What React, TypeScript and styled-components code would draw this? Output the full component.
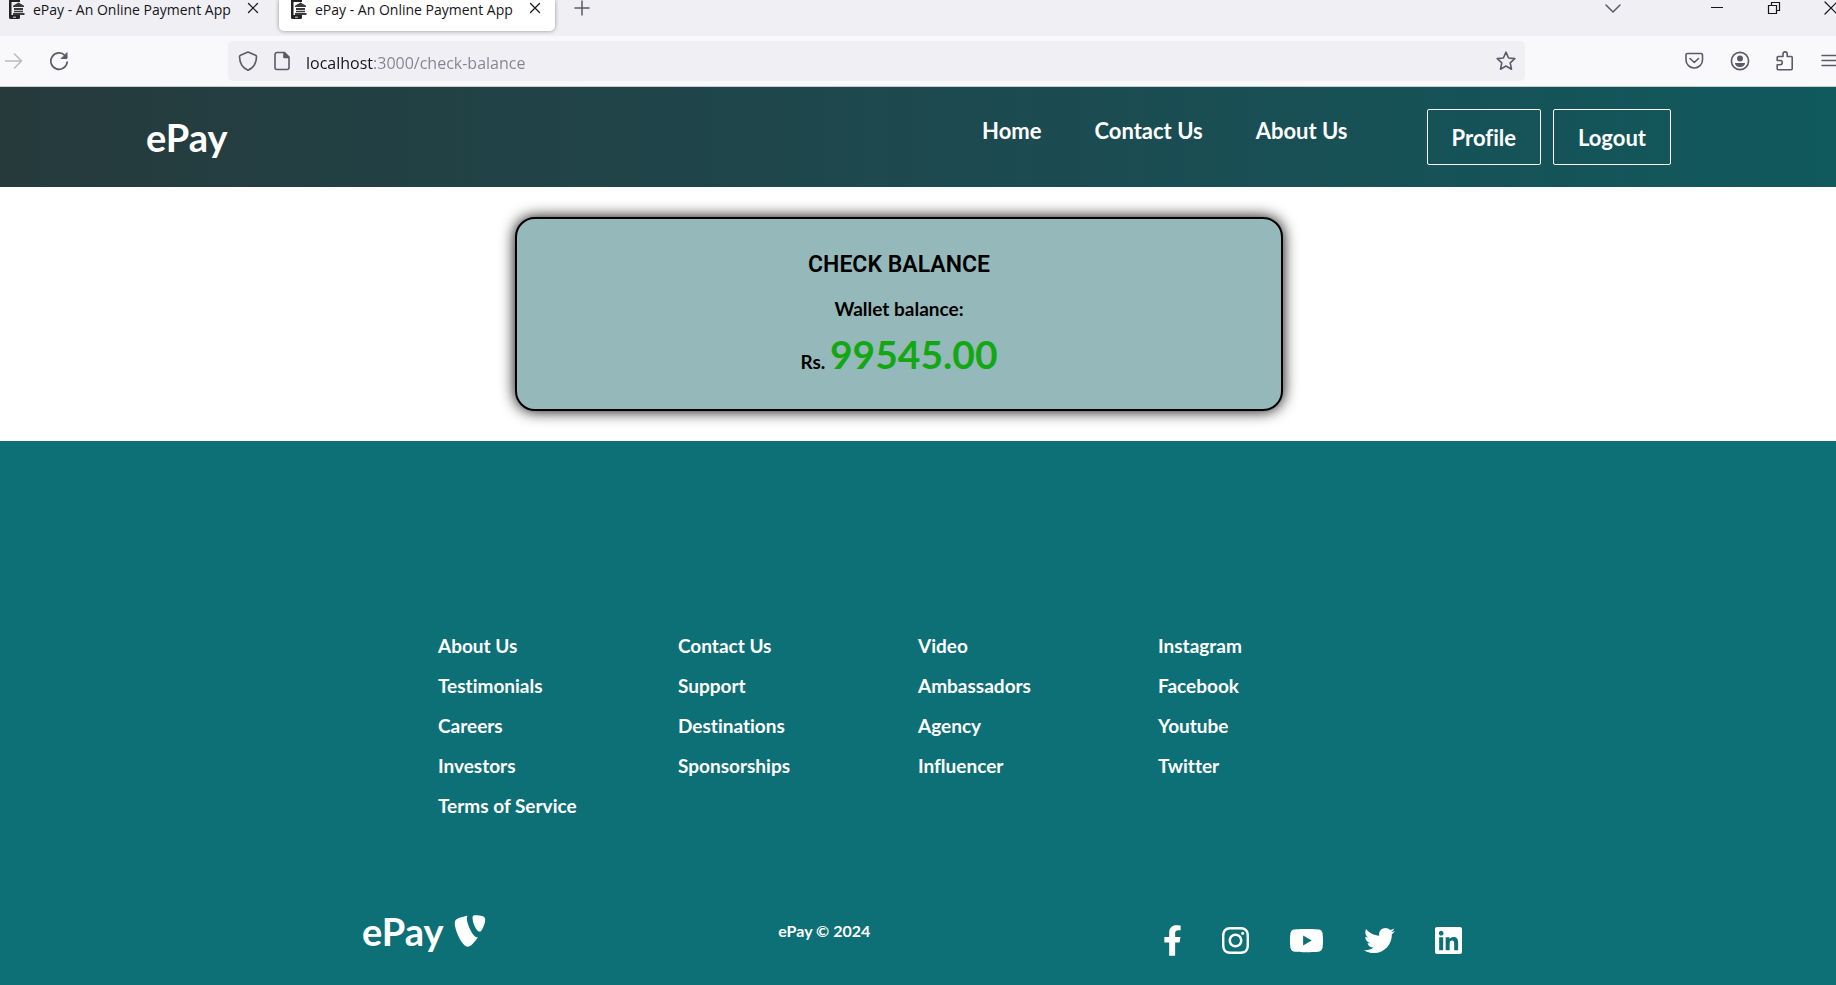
import React from "react";
import styled, { createGlobalStyle } from "styled-components";
import { FaFacebookF, FaInstagram, FaYoutube, FaTwitter, FaLinkedin, FaTypo3 } from "react-icons/fa";

const GlobalStyle = createGlobalStyle`
  * { box-sizing: border-box; }
  body {
    margin: 0;
    background: #fff;
    color: #000;
    font-family: Lato, "Open Sans", sans-serif;
    font-weight: 700;
    font-variant-ligatures: no-common-ligatures;
  }
  button, input { font: inherit; font-variant-ligatures: inherit; }
  a { color: inherit; text-decoration: none; }
`;

const Page = styled.div`
  display: flex;
  flex-direction: column;
  min-height: 100vh;
`;

/* ---------- Browser window ---------- */

const Browser = styled.div`
  overflow: hidden;
  border-bottom: 1px solid #ccccd0;
  background: #f9f9fb;
  color: #5b5b66;
  font-family: "Open Sans", "Noto Sans", sans-serif;
  font-weight: 400;
`;

const TabStrip = styled.div`
  display: flex;
  align-items: flex-start;
  gap: 6px;
  height: 36px;
  padding-right: 0;
  margin-left: -3px;
  background: #f0eff4;
`;

const Tab = styled.div<{ $active?: boolean }>`
  display: flex;
  align-items: flex-start;
  gap: 8px;
  width: 276px;
  height: 31px;
  padding: 0 13px 0 12px;
  border-radius: 0 0 5px 5px;
  background: ${p => (p.$active ? "#fff" : "transparent")};
  box-shadow: ${p => (p.$active ? "0 0 4px rgba(0, 0, 0, 0.4)" : "none")};
  color: #15141a;
  font-size: 14px;
  line-height: 20px;
  white-space: nowrap;
`;

const TabTitle = styled.span`
  flex: 1;
`;

const IconButton = styled.button<{ $faded?: boolean }>`
  display: flex;
  flex: none;
  align-items: center;
  justify-content: center;
  width: 20px;
  height: 20px;
  padding: 0;
  border: 0;
  background: none;
  color: inherit;
  opacity: ${p => (p.$faded ? 0.4 : 1)};
`;

const TabButton = styled(IconButton)`
  width: 14px;
  height: 16px;
  color: #15141a;
`;

const NewTabButton = styled(IconButton)`
  height: 16px;
  margin-left: 11px;
`;

const WindowButtons = styled.div`
  display: flex;
  gap: 37px;
  height: 16px;
  margin: 0 -5px 0 auto;
  align-items: center;
  color: #15141a;
`;

const ListTabs = styled(IconButton)`
  margin-right: 47px;
  color: #5b5b66;
`;

const Toolbar = styled.div`
  display: flex;
  align-items: center;
  height: 50px;
`;

const NavButtons = styled.div`
  display: flex;
  flex: none;
  gap: 25px;
  width: 228px;
  padding-left: 4px;
`;

const AddressBar = styled.form`
  display: flex;
  flex: 1;
  align-items: center;
  gap: 14px;
  height: 40px;
  padding: 0 9px 0 10px;
  border-radius: 5px;
  background: #f0eff4;
`;

const AddressInput = styled.input`
  flex: 1;
  min-width: 0;
  height: 30px;
  padding: 3px 0 0;
  border: 0;
  outline: 0;
  background: linear-gradient(90deg, #15141a 68px, #84838c 68px);
  background-clip: text;
  -webkit-background-clip: text;
  color: transparent;
  font-size: 16px;
`;

const ToolbarActions = styled.div`
  display: flex;
  flex: none;
  justify-content: flex-end;
  gap: 25px;
  width: 315px;
  margin-right: -4px;
`;

/* ---------- Site header ---------- */

const Header = styled.header`
  display: flex;
  justify-content: center;
  background: linear-gradient(90deg, #263a3c, #1b4c52 60%, #10595d);
  color: #fff;
`;

const HeaderInner = styled.div`
  display: flex;
  align-items: center;
  width: 100%;
  max-width: 1544px;
  min-height: 100px;
  padding-right: 19px;
`;

const Brand = styled.a`
  display: flex;
  align-items: center;
  gap: 10px;
  font-size: 38px;
  line-height: 46px;
`;

const Nav = styled.nav`
  display: flex;
  gap: 53px;
  margin: 0 79px 12px auto;
  font-size: 22px;
  line-height: 28px;
`;

const Actions = styled.div`
  display: flex;
  gap: 12px;
`;

const OutlineButton = styled.button`
  height: 56px;
  padding: 2px 24px 0;
  border: 1px solid #fff;
  border-radius: 2px;
  background: transparent;
  color: #fff;
  font-size: 22px;
  line-height: 28px;
`;

/* ---------- Balance card ---------- */

const Main = styled.main`
  display: flex;
  justify-content: center;
  padding: 30px 38px 30px 0;
`;

const Card = styled.section`
  display: flex;
  flex-direction: column;
  align-items: center;
  width: 768px;
  padding: 32px 20px 21px;
  border: 2px solid #000;
  border-radius: 20px;
  background: #95b9ba;
  box-shadow: 0 0 15px #000;
`;

const CardTitle = styled.h1`
  margin: 0 0 18px;
  font-family: Roboto, "Liberation Sans", sans-serif;
  font-size: 23px;
  font-weight: 600;
  line-height: 28px;
`;

const CardLabel = styled.p`
  margin: 0 0 7px;
  font-size: 19px;
  line-height: 24px;
`;

const Balance = styled.p`
  margin: 0;
  font-size: 19px;
  line-height: 52px;
`;

const Amount = styled.span`
  color: #13a813;
  font-size: 39px;
`;

/* ---------- Footer ---------- */

const Footer = styled.footer`
  display: flex;
  flex: 1;
  flex-direction: column;
  align-items: center;
  padding: 185px 20px 20px;
  background: #0e7077;
  color: #fff;
`;

const LinkColumns = styled.div`
  display: grid;
  grid-template-columns: repeat(4, 1fr);
  width: 100%;
  max-width: 960px;
`;

const LinkList = styled.ul`
  margin: 0;
  padding: 0;
  list-style: none;
  font-size: 19px;
  line-height: 40px;
`;

const FooterBar = styled.div`
  display: flex;
  align-items: center;
  justify-content: space-between;
  width: 100%;
  max-width: 1112px;
  margin-top: 79px;
  padding-right: 12px;
`;

const Copyright = styled.small`
  font-size: 16px;
  line-height: 20px;
`;

const Social = styled.div`
  display: flex;
  gap: 40px;
  padding-top: 20px;
`;

const SocialLink = styled.a<{ $width: number }>`
  display: flex;
  svg { width: ${p => p.$width}px; height: 31px; }
`;

const BrandMark = styled(FaTypo3)`
  width: 32px;
  height: 36px;
`;

/* ---------- Icons ---------- */

type IconProps = { size?: number; width?: number; children: React.ReactNode };
const Icon = ({ size = 20, width = 1.5, children }: IconProps) => (
  <svg width={size} height={size} viewBox={`0 0 ${size} ${size}`} fill="none" stroke="currentColor"
    strokeWidth={width} strokeLinecap="round" strokeLinejoin="round" aria-hidden="true">{children}</svg>
);

const Favicon = () => (
  <svg width="16" height="19" viewBox="0 0 16 19" aria-hidden="true">
    <path d="M0 0h11v2H2.500v13H11v2.500Q11 19 9.500 19h-8Q0 19 0 17.500Z" fill="#222" />
    <path d="M4 5.800 9.500 2.500 15 5.800V7H4ZM5 8h9v2H5ZM5 10.700h9v1.600H5ZM4 13h11.500v2H4Z" fill="#3a3a3a" />
    <path d="M4 17.200h3" stroke="#ddd" />
  </svg>
);

const CloseIcon = () => <Icon size={14} width={1.2}><path d="m2.500 2.500 9 9m0-9-9 9" /></Icon>;

const BrowserTab = ({ active }: { active?: boolean }) => (
  <Tab $active={active}>
    <Favicon />
    <TabTitle>ePay - An Online Payment App</TabTitle>
    <TabButton aria-label="Close tab"><CloseIcon /></TabButton>
  </Tab>
);

const columns = [
  ["About Us", "Testimonials", "Careers", "Investors", "Terms of Service"],
  ["Contact Us", "Support", "Destinations", "Sponsorships"],
  ["Video", "Ambassadors", "Agency", "Influencer"],
  ["Instagram", "Facebook", "Youtube", "Twitter"],
];

const socials = [
  { name: "Facebook", Glyph: FaFacebookF, width: 19 },
  { name: "Instagram", Glyph: FaInstagram, width: 27 },
  { name: "Youtube", Glyph: FaYoutube, width: 35 },
  { name: "Twitter", Glyph: FaTwitter, width: 31 },
  { name: "LinkedIn", Glyph: FaLinkedin, width: 27 },
];

export default function App() {
  return (
    <Page>
      <GlobalStyle />
      <Browser>
        <TabStrip>
          <BrowserTab />
          <BrowserTab active />
          <NewTabButton aria-label="New tab"><Icon><path d="M10 3v14M3 10h14" /></Icon></NewTabButton>
          <WindowButtons>
            <ListTabs aria-label="List all tabs"><Icon><path d="m3 7 7 7 7-7" /></Icon></ListTabs>
            <IconButton aria-label="Minimize"><Icon width={1}><path d="M4.500 9.500h11" strokeLinecap="square" /></Icon></IconButton>
            <IconButton aria-label="Restore"><Icon width={1.2}><path d="M4.500 7.500h8v8h-8zM7.500 7.500v-3h8v8h-3" strokeLinejoin="miter" /></Icon></IconButton>
            <IconButton aria-label="Close"><Icon width={1.2}><path d="m4 4 12 12m0-12L4 16" /></Icon></IconButton>
          </WindowButtons>
        </TabStrip>
        <Toolbar>
          <NavButtons>
            <IconButton $faded aria-label="Forward"><Icon><path d="M1.500 10h16m-7-7 7 7-7 7" /></Icon></IconButton>
            <IconButton aria-label="Reload">
              <Icon width={1.7}><path d="M16 4.500A8.200 8.200 0 1 0 18.200 11" /><path d="M18 2v5.500h-5.500Z" fill="currentColor" strokeWidth="1" /></Icon>
            </IconButton>
          </NavButtons>
          <AddressBar>
            <IconButton type="button" aria-label="Tracking protection">
              <Icon width={1.6}><path d="M10 1 17.500 4.300c.7.300 1 .9 1 1.500C18.300 12 15.500 17 10 19.200 4.500 17 1.700 12 1.500 5.800c0-.6.300-1.200 1-1.500Z" /></Icon>
            </IconButton>
            <IconButton type="button" aria-label="Site information">
              <Icon width={1.6}><path d="M5 1.500h7.500L17 6v10.500a2 2 0 0 1-2 2H5a2 2 0 0 1-2-2v-13a2 2 0 0 1 2-2Z" /><path d="M12 2v4.500h4.500Z" fill="currentColor" /></Icon>
            </IconButton>
            <AddressInput aria-label="Address" type="text" defaultValue="localhost:3000/check-balance" />
            <IconButton type="button" aria-label="Bookmark this page">
              <Icon width={1.6}><path d="M10 1.200 12.600 7l6.200.600-4.600 4.200 1.300 6.400L10 15l-5.500 3.200 1.300-6.400L1.200 7.600 7.400 7Z" /></Icon>
            </IconButton>
          </AddressBar>
          <ToolbarActions>
            <IconButton aria-label="Save to Pocket">
              <Icon width={1.6}><path d="M2.500 2.500h13.500a1.500 1.500 0 0 1 1.500 1.500V9a8 7.700 0 0 1-16.500 0V4a1.500 1.500 0 0 1 1.500-1.500Z" /><path d="m5 7.500 4.300 4L13.500 7.500" /></Icon>
            </IconButton>
            <IconButton aria-label="Account">
              <Icon width={1.6}><circle cx="10" cy="10" r="8.600" /><circle cx="10" cy="7.500" r="3" fill="currentColor" stroke="none" /><path d="M5 12h10c0 2.500-2.500 4-5 4s-5-1.500-5-4Z" fill="currentColor" stroke="none" /></Icon>
            </IconButton>
            <IconButton aria-label="Extensions">
              <Icon width={1.6}><path d="M3.200 18.800h13a1 1 0 0 0 1-1V6.500a1 1 0 0 0-1-1h-4V3a2 2 0 0 0-4.200 0v2.500H3.200a1 1 0 0 0-1 1v3h3a1.900 1.900 0 0 1 0 4.200h-3v4.100a1 1 0 0 0 1 1Z" /></Icon>
            </IconButton>
            <IconButton aria-label="Menu"><Icon><path d="M2 4.500h16M2 9.500h16M2 14.500h16" /></Icon></IconButton>
          </ToolbarActions>
        </Toolbar>
      </Browser>

      <Header>
        <HeaderInner>
          <Brand href="#">ePay</Brand>
          <Nav>
            <a href="#home">Home</a>
            <a href="#contact">Contact Us</a>
            <a href="#about">About Us</a>
          </Nav>
          <Actions>
            <OutlineButton>Profile</OutlineButton>
            <OutlineButton>Logout</OutlineButton>
          </Actions>
        </HeaderInner>
      </Header>

      <Main>
        <Card>
          <CardTitle>CHECK BALANCE</CardTitle>
          <CardLabel>Wallet balance:</CardLabel>
          <Balance>Rs. <Amount>99545.00</Amount></Balance>
        </Card>
      </Main>

      <Footer>
        <LinkColumns>
          {columns.map(links => (
            <LinkList key={links[0]}>
              {links.map(link => <li key={link}><a href="#link">{link}</a></li>)}
            </LinkList>
          ))}
        </LinkColumns>
        <FooterBar>
          <Brand href="#">ePay<BrandMark aria-hidden="true" /></Brand>
          <Copyright>ePay © 2024</Copyright>
          <Social>
            {socials.map(({ name, Glyph, width }) => (
              <SocialLink key={name} href="#social" aria-label={name} $width={width}><Glyph /></SocialLink>
            ))}
          </Social>
        </FooterBar>
      </Footer>
    </Page>
  );
}
